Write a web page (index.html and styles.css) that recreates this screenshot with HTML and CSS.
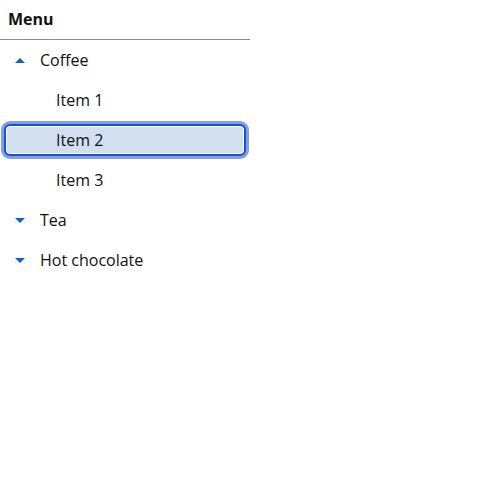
FILE: index.html
```html
<!DOCTYPE html>
<html>
<head>
<meta charset="utf-8">
<link rel="stylesheet" href="styles.css">
</head>
<body>
<nav class="menu">
  <div class="menu-title">Menu</div>
  <ul class="tree">
    <li class="group">
      <div class="row"><span class="caret up"></span><span class="label">Coffee</span></div>
      <ul class="sub">
        <li class="row item"><span class="label">Item 1</span></li>
        <li class="row item focused"><span class="label">Item 2</span></li>
        <li class="row item"><span class="label">Item 3</span></li>
      </ul>
    </li>
    <li class="group">
      <div class="row"><span class="caret down"></span><span class="label">Tea</span></div>
    </li>
    <li class="group">
      <div class="row"><span class="caret down"></span><span class="label">Hot chocolate</span></div>
    </li>
  </ul>
</nav>
</body>
</html>
```
FILE: styles.css
```css
html, body {
  margin: 0;
  padding: 0;
  background: #fff;
}
body {
  font-family: "Open Sans", "Noto Sans", sans-serif;
  font-size: 16px;
  color: #111;
}
.menu {
  width: 250px;
}
.menu-title {
  height: 40px;
  box-sizing: border-box;
  padding-left: 8px;
  font-weight: 700;
  line-height: 39px;
  border-bottom: 1px solid #8c8c8c;
}
.tree, .sub {
  list-style: none;
  margin: 0;
  padding: 0;
}
.row {
  height: 40px;
  display: flex;
  align-items: center;
  box-sizing: border-box;
}
.caret {
  width: 0;
  height: 0;
  margin-left: 15px;
  margin-right: 15px;
  border-left: 5px solid transparent;
  border-right: 5px solid transparent;
}
.caret.up {
  border-bottom: 5px solid #1a5cc8;
}
.caret.down {
  border-top: 5px solid #1a5cc8;
}
.item {
  padding-left: 56px;
}
.focused {
  margin: 4px 4px;
  height: 32px;
  padding-left: 50px;
  border: 2px solid #1b4ed6;
  border-radius: 6px;
  background: #d2dff1;
  box-shadow: 0 0 0 3px #7f9fe6, inset 0 0 0 1px #fff;
}
```
